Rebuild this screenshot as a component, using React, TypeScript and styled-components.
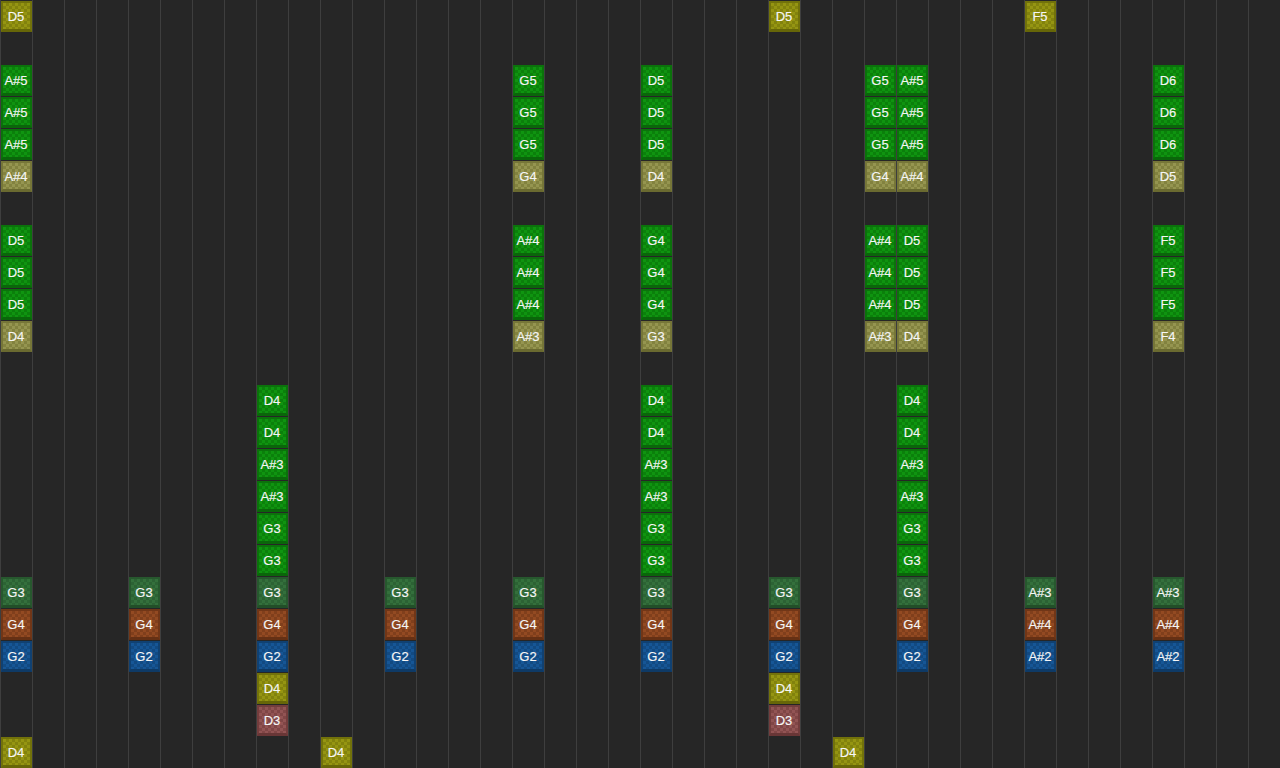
import React from "react";
import styled, { createGlobalStyle } from "styled-components";

type Kind = "lead" | "soft" | "gold" | "moss" | "rust" | "blue" | "rose";

const palette: Record<Kind, { base: string; check: string; edge: string; low: string }> = {
  lead: { base: "#0f9410", check: "#0b800b", edge: "#0b720b", low: "#0a660a" },
  soft: { base: "#959550", check: "#82823f", edge: "#767638", low: "#6a6a30" },
  gold: { base: "#959512", check: "#82820d", edge: "#72720a", low: "#666608" },
  moss: { base: "#34703c", check: "#2c6234", edge: "#27582e", low: "#224e28" },
  rust: { base: "#934a22", check: "#803f1c", edge: "#713617", low: "#653014" },
  blue: { base: "#165696", check: "#124a82", edge: "#104172", low: "#0e3a66" },
  rose: { base: "#925454", check: "#804646", edge: "#733d3d", low: "#683636" },
};

const GlobalStyle = createGlobalStyle`
  html, body { margin: 0; padding: 0; background: #262626; overflow: hidden; }
`;

const Roll = styled.div`
  display: grid;
  grid-template-columns: repeat(40, 32px);
  grid-template-rows: repeat(24, 32px);
  width: 1280px;
  height: 768px;
  overflow: hidden;
  background-color: #262626;
  background-image: linear-gradient(to right, #3e3e3e 1px, transparent 1px);
  background-size: 32px 32px;
  font-family: "Liberation Sans", Arial, sans-serif;
`;

const Note = styled.div<{ $kind: Kind; $col: number; $row: number }>`
  grid-column: ${(p) => p.$col + 1};
  grid-row: ${(p) => p.$row + 1};
  margin: 1px 0 0 1px;
  width: 31px;
  height: 31px;
  box-sizing: border-box;
  padding: 2px 1px 0 0;
  display: flex;
  align-items: center;
  justify-content: center;
  border: 2px solid ${(p) => palette[p.$kind].edge};
  border-bottom: 3px solid ${(p) => palette[p.$kind].low};
  background-color: ${(p) => palette[p.$kind].base};
  background-image: repeating-conic-gradient(
    ${(p) => palette[p.$kind].check} 0% 25%,
    transparent 0% 50%
  );
  background-size: 6px 6px;
  color: #f6f6f6;
  font-size: 13px;
  line-height: 16px;
  -webkit-text-stroke: 0.15px #f6f6f6;
`;

type Item = [string, Kind, number, number];
const notes: Item[] = [];
const put = (row: number, kind: Kind, list: [number, string][]) =>
  list.forEach(([col, label]) => notes.push([label, kind, col, row]));

put(0, "gold", [[0, "D5"], [24, "D5"], [32, "F5"]]);

const upper: [number, string][] = [[0, "A#5"], [16, "G5"], [20, "D5"], [27, "G5"], [28, "A#5"], [36, "D6"]];
[2, 3, 4].forEach((r) => put(r, "lead", upper));
put(5, "soft", [[0, "A#4"], [16, "G4"], [20, "D4"], [27, "G4"], [28, "A#4"], [36, "D5"]]);

const middle: [number, string][] = [[0, "D5"], [16, "A#4"], [20, "G4"], [27, "A#4"], [28, "D5"], [36, "F5"]];
[7, 8, 9].forEach((r) => put(r, "lead", middle));
put(10, "soft", [[0, "D4"], [16, "A#3"], [20, "G3"], [27, "A#3"], [28, "D4"], [36, "F4"]]);

[[12, "D4"], [13, "D4"], [14, "A#3"], [15, "A#3"], [16, "G3"], [17, "G3"]].forEach(([r, label]) =>
  put(r as number, "lead", [8, 20, 28].map((c) => [c, label as string] as [number, string]))
);

const beat = [0, 4, 8, 12, 16, 20, 24, 28];
const chord = (row: number, kind: Kind, a: string, b: string) =>
  put(row, kind, [
    ...beat.map((c) => [c, a] as [number, string]),
    [32, b],
    [36, b],
  ]);
chord(18, "moss", "G3", "A#3");
chord(19, "rust", "G4", "A#4");
chord(20, "blue", "G2", "A#2");

put(21, "gold", [[8, "D4"], [24, "D4"]]);
put(22, "rose", [[8, "D3"], [24, "D3"]]);
put(23, "gold", [[0, "D4"], [10, "D4"], [26, "D4"]]);

export default function App() {
  return (
    <>
      <GlobalStyle />
      <Roll>
        {notes.map(([label, kind, col, row]) => (
          <Note key={`${col}-${row}`} $kind={kind} $col={col} $row={row}>
            {label}
          </Note>
        ))}
      </Roll>
    </>
  );
}
